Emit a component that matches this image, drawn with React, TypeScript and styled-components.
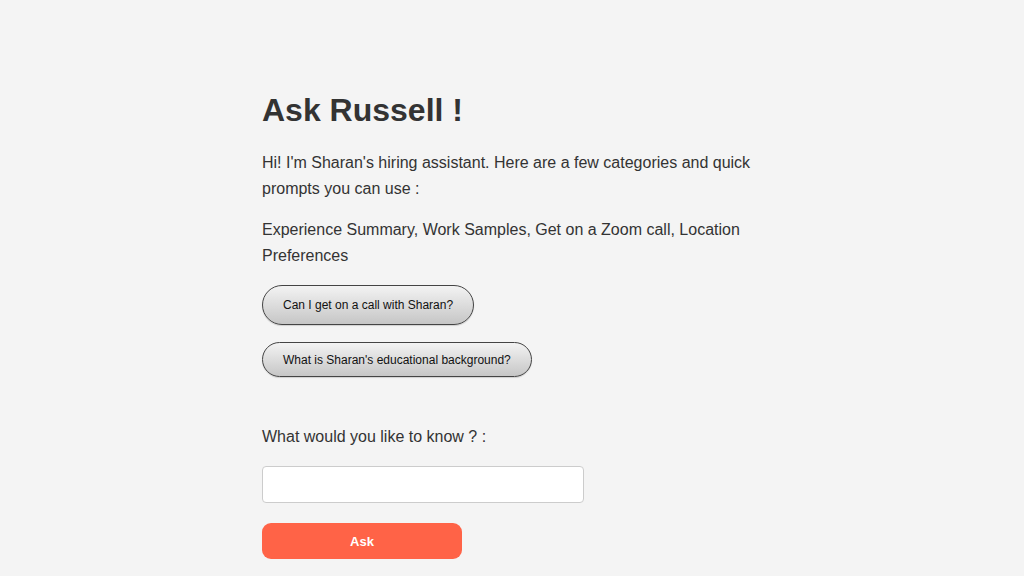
import React, { useState } from "react";
import styled, { createGlobalStyle } from "styled-components";

const GlobalStyle = createGlobalStyle`
  html, body {
    margin: 0;
    padding: 0;
    background: #f4f4f4;
  }
  body {
    font-family: "Liberation Sans", Arial, sans-serif;
    color: #333;
  }
`;

const Page = styled.main`
  min-height: 576px;
  box-sizing: border-box;
  padding-top: 92px;
`;

const Container = styled.div`
  width: 500px;
  margin: 0 auto;
  display: flex;
  flex-direction: column;
  align-items: flex-start;
`;

const Title = styled.h1`
  font-size: 32px;
  font-weight: bold;
  line-height: 37px;
  margin: 0 0 21px 0;
  color: #333;
`;

const Text = styled.p`
  font-size: 16px;
  line-height: 25.6px;
  margin: 0 0 16px 0;
  color: #333;
`;

const Prompts = styled.div`
  display: flex;
  flex-direction: column;
  align-items: flex-start;
  gap: 17px;
  margin-top: 1px;
`;

const PromptButton = styled.button<{ $tall?: boolean }>`
  font-family: "Liberation Sans", Arial, sans-serif;
  font-size: 12px;
  line-height: 14px;
  color: #111;
  padding: ${(p) => (p.$tall ? "12px 20px" : "9.5px 20px")};
  border: 1px solid #444;
  border-radius: 20px;
  background: linear-gradient(to bottom, #f3f3f3, #c6c6c6);
  box-shadow: 0 1px 1px rgba(0, 0, 0, 0.15);
  cursor: pointer;
`;

const Label = styled.label`
  font-size: 16px;
  line-height: 26px;
  margin-top: 47px;
  color: #333;
`;

const Input = styled.input`
  box-sizing: border-box;
  width: 322px;
  height: 37px;
  margin-top: 16px;
  padding: 8px 10px;
  font-family: "Liberation Sans", Arial, sans-serif;
  font-size: 14px;
  background: #fff;
  border: 1px solid #ccc;
  border-radius: 4px;
  outline: none;
`;

const AskButton = styled.button`
  width: 200px;
  height: 36px;
  margin-top: 20px;
  border: none;
  border-radius: 9px;
  background: #ff6347;
  color: #fff;
  font-family: "Liberation Sans", Arial, sans-serif;
  font-size: 13px;
  font-weight: bold;
  cursor: pointer;
`;

export default function App() {
  const [q, setQ] = useState("");
  return (
    <>
      <GlobalStyle />
      <Page>
        <Container>
          <Title>Ask Russell !</Title>
          <Text>
            Hi! I'm Sharan's hiring assistant. Here are a few categories and quick prompts you can use :
          </Text>
          <Text>Experience Summary, Work Samples, Get on a Zoom call, Location Preferences</Text>
          <Prompts>
            <PromptButton $tall>Can I get on a call with Sharan?</PromptButton>
            <PromptButton>What is Sharan's educational background?</PromptButton>
          </Prompts>
          <Label htmlFor="question">What would you like to know ? :</Label>
          <Input id="question" value={q} onChange={(e) => setQ(e.target.value)} />
          <AskButton>Ask</AskButton>
        </Container>
      </Page>
    </>
  );
}
